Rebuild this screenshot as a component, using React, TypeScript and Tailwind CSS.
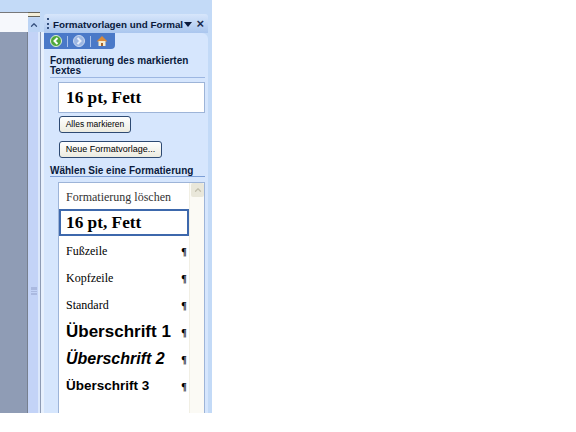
import { ChevronUp } from 'lucide-react';

const tahoma = "font-['Liberation_Sans',sans-serif]";
const serifFont = "font-['Liberation_Serif',serif]";

function StyleRow({ label, className }: { label: string; className: string }) {
  return (
    <div className="flex h-[27px] items-center justify-between pl-[7px] pt-[3px]">
      <span className={`whitespace-nowrap text-black ${className}`}>{label}</span>
      <span className="w-[10px] text-center font-['Liberation_Serif',serif] text-[10px] font-bold text-black">¶</span>
    </div>
  );
}

export default function App() {
  const serifRow = "font-['Liberation_Serif',serif] text-[12px] text-[#333]";
  return (
    <div className="flex h-[413px] w-[212px] flex-col overflow-hidden bg-[#c3daf7]">
      <div className="flex min-h-0 flex-1">
        {/* document area */}
        <div className="flex w-[28px] flex-col pt-[12px]">
          <div className="h-[20px] border-t border-[#77787a] bg-[#f6f8fc]" />
          <div className="flex-1 border-r border-[#77808f] bg-[#8f9cb5]" />
        </div>

        {/* vertical scrollbar */}
        <div className="flex w-[12px] flex-col pt-[12px]">
          <div className="h-[5px] border-y border-[#66645a] bg-[#f4efd9]" />
          <div className="mt-px flex h-[14px] items-center justify-center rounded-[2px] bg-[#bcd4f5]">
            <ChevronUp size={10} strokeWidth={3} className="text-[#38527f]" />
          </div>
          <div className="flex flex-1 flex-col items-start border-r-2 border-[#dbe7fb] bg-[#c3d3f7] pl-[3px] pt-[255px]">
            <div className="h-[8px] w-[6px] border-y-2 border-[#aab9e0] bg-[repeating-linear-gradient(to_bottom,#aab9e0_0_1px,transparent_1px_2px)]" />
          </div>
        </div>

        {/* splitter */}
        <div className="mt-[32px] w-[4px] border-l border-[#8d9bb5] bg-[#e7f0fd]" />

        {/* task pane */}
        <div className={`flex min-w-0 flex-1 flex-col pt-[14px] ${tahoma}`}>
          <div className="flex h-[19px] items-center rounded-t-[3px] bg-gradient-to-b from-[#d7e6fb] to-[#aac6ee] pl-[3px] pr-[4px]">
            <div className="mr-[4px] h-[11px] w-[2px] border-l-2 border-dotted border-[#34507e]" />
            <span className="whitespace-nowrap pt-[2px] text-[9.8px] font-bold leading-[12px] text-[#0a1a3c]">Formatvorlagen und Formal</span>
            <svg width="8" height="5" viewBox="0 0 8 5" className="ml-[1px] mt-[1px] shrink-0">
              <path d="M0 0 H8 L4 5 Z" fill="#0a1a3c" />
            </svg>
            <span className="ml-auto text-[13px] font-bold leading-none text-[#1a2a4c]">×</span>
          </div>

          <div className="flex min-h-0 flex-1 flex-col rounded-tr-[6px] bg-[#d6e6fd]">
            {/* nav toolbar */}
            <div className="flex h-[16px] w-[71px] items-center gap-[5px] rounded-br-[4px] bg-[#4a79c8] pl-[6px]">
              <svg width="12" height="12" viewBox="0 0 12 12">
                <circle cx="6" cy="6" r="5.5" fill="#4fa83a" stroke="#dff0d8" />
                <path d="M7.5 3 L4.5 6 L7.5 9" fill="none" stroke="#fff" strokeWidth="2" />
              </svg>
              <div className="h-[11px] w-px bg-[#a9c2ec]" />
              <svg width="12" height="12" viewBox="0 0 12 12">
                <circle cx="6" cy="6" r="5.5" fill="#9db7e2" stroke="#c9d8f1" />
                <path d="M4.5 3 L7.5 6 L4.5 9" fill="none" stroke="#e6eefb" strokeWidth="2" />
              </svg>
              <div className="h-[11px] w-px bg-[#a9c2ec]" />
              <svg width="12" height="12" viewBox="0 0 12 12">
                <path d="M6 1 L11.5 6.5 H0.5 Z" fill="#d98a3a" />
                <rect x="2.5" y="6" width="7" height="5" fill="#f7edcf" />
                <rect x="5" y="8" width="2" height="3" fill="#a8652b" />
              </svg>
            </div>

            <div className="flex min-h-0 flex-1 flex-col pl-[6px] pr-[3px] pt-[7px]">
              <div className="text-[10px] font-bold leading-[10px] text-[#0a1a3c]">
                Formatierung des markierten
                <br />
                Textes
              </div>
              <div className="mt-px h-px bg-[#9db7e2]" />

              <div className={`ml-[8px] mt-[4px] flex h-[31px] items-center border border-[#9db4d8] bg-white pl-[7px] text-[17.3px] font-bold text-black ${serifFont}`}>
                16 pt, Fett
              </div>

              <button className="ml-[9px] mt-[3px] h-[17px] w-[72px] rounded-[3px] border border-[#2e4a72] bg-gradient-to-b from-white to-[#ecebe0] text-[8.5px] text-black">
                Alles markieren
              </button>
              <button className="ml-[9px] mt-[8px] h-[17px] w-[103px] rounded-[3px] border border-[#2e4a72] bg-gradient-to-b from-white to-[#ecebe0] text-[9px] text-black">
                Neue Formatvorlage...
              </button>

              <div className="mt-[8px] whitespace-nowrap text-[10px] font-bold leading-[10px] text-[#0a1a3c]">Wählen Sie eine Formatierung</div>
              <div className="h-px bg-[#7d9fd6]" />

              {/* style list */}
              <div className="ml-[8px] mt-[5px] flex min-h-0 flex-1 border border-b-0 border-[#9db4d8] bg-white">
                <div className="min-w-0 flex-1">
                  <div className={`flex h-[26px] items-center pl-[7px] pt-[1px] ${serifRow}`}>Formatierung löschen</div>
                  <div className={`flex h-[27px] items-center border-2 border-[#3d68ac] pl-[5px] text-[17.3px] font-bold text-black ${serifFont}`}>
                    16 pt, Fett
                  </div>
                  <StyleRow label="Fußzeile" className={serifRow} />
                  <StyleRow label="Kopfzeile" className={serifRow} />
                  <StyleRow label="Standard" className={serifRow} />
                  <StyleRow label="Überschrift 1" className="text-[17px] font-bold" />
                  <StyleRow label="Überschrift 2" className="text-[16px] font-bold italic" />
                  <StyleRow label="Überschrift 3" className="text-[13.5px] font-bold" />
                </div>
                <div className="w-[15px] border-l border-[#f1efe4] bg-[#fbfaf5] pl-px">
                  <div className="flex h-[14px] items-center justify-center rounded-[2px] bg-[#e9e7da]">
                    <ChevronUp size={10} strokeWidth={3} className="text-[#c3c0ae]" />
                  </div>
                </div>
              </div>
            </div>
          </div>
        </div>
        <div className="w-[4px] bg-[#c3daf7]" />
      </div>
    </div>
  );
}
